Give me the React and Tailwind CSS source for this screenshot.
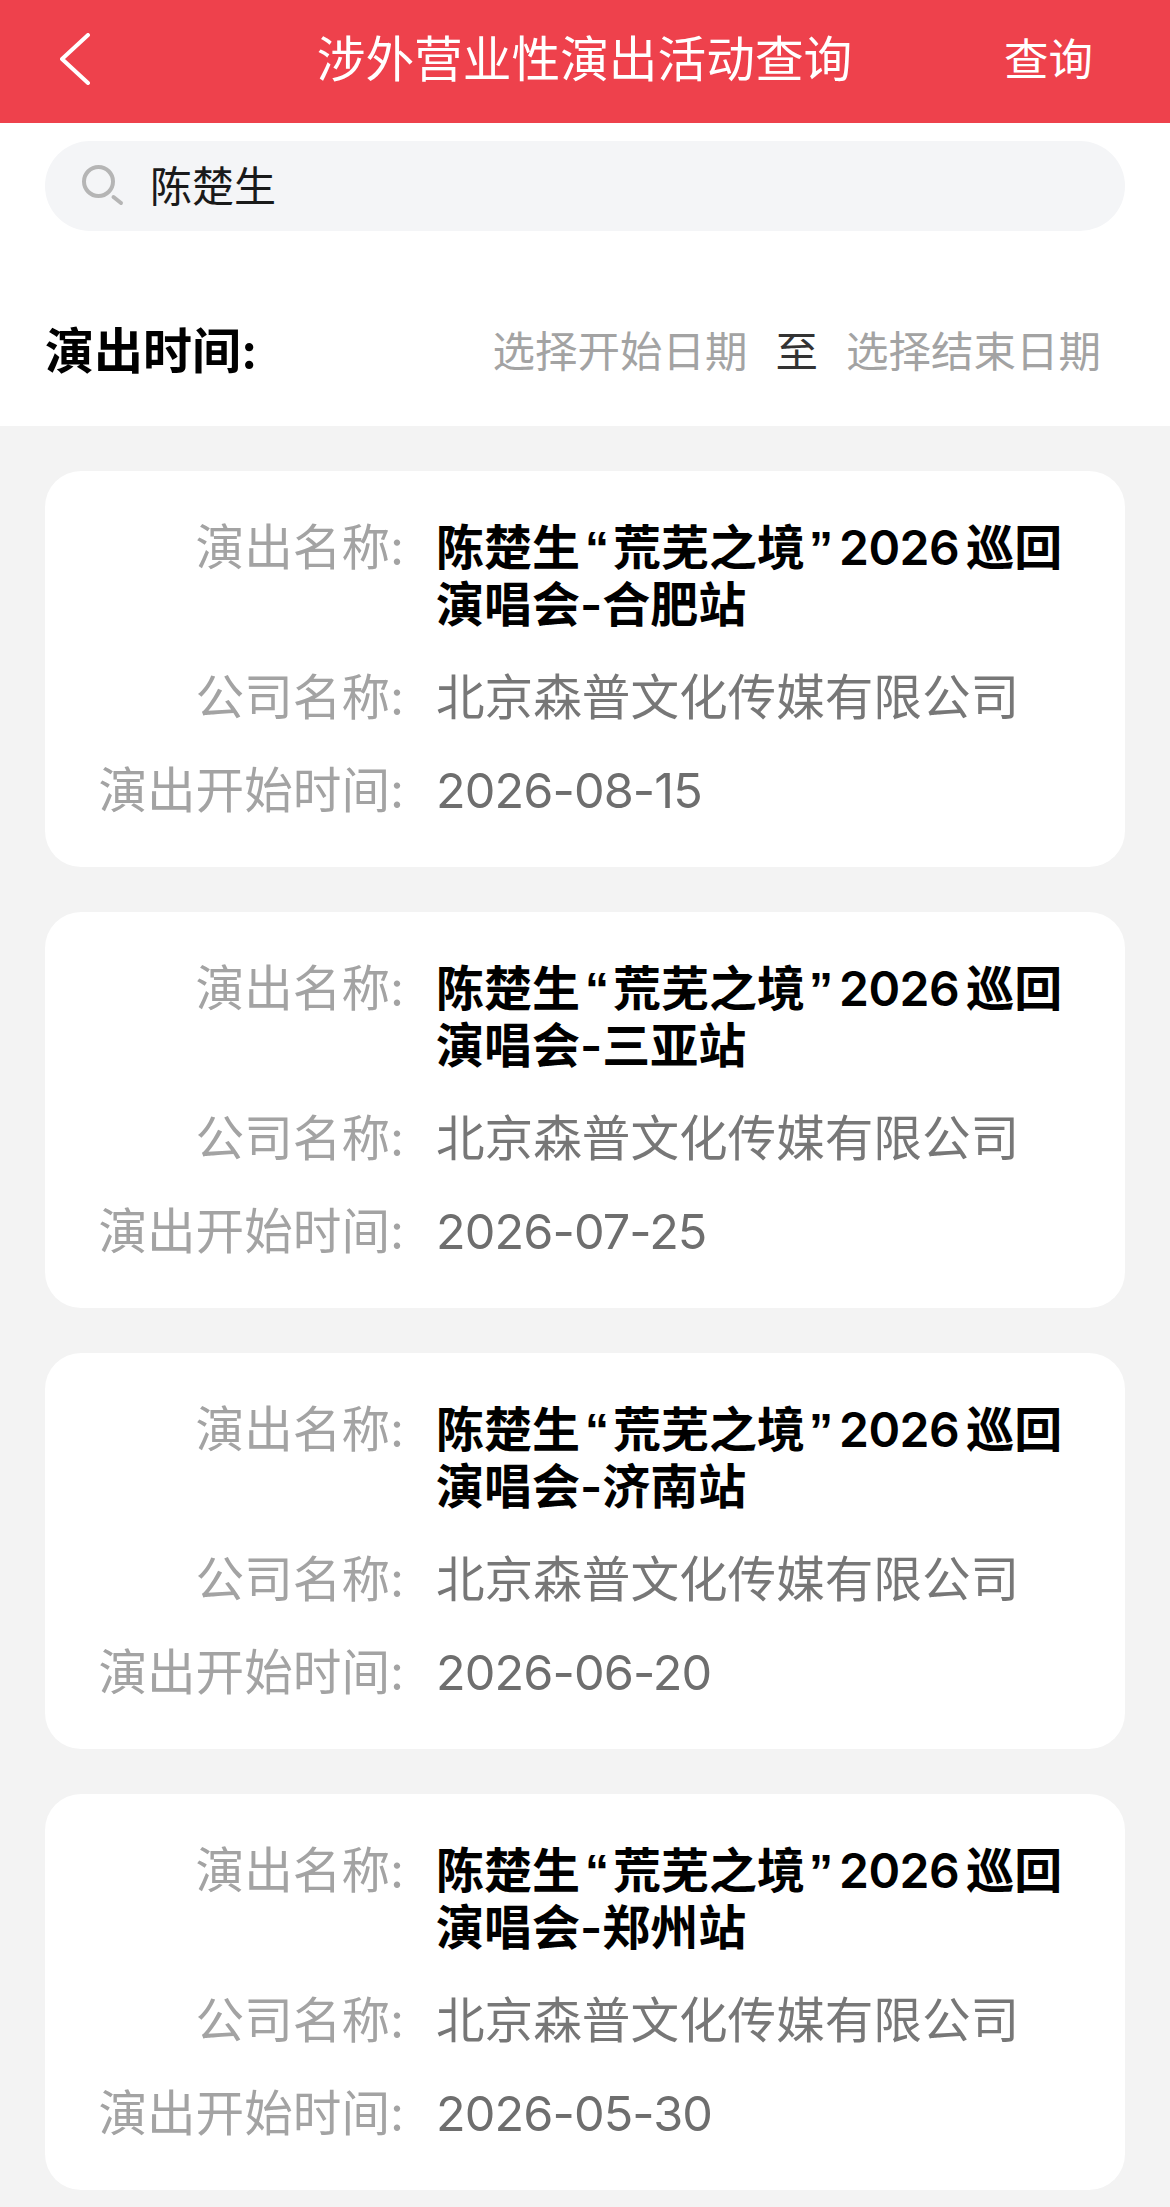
const shows = [
  { city: '合肥站', date: '2026-08-15' },
  { city: '三亚站', date: '2026-07-25' },
  { city: '济南站', date: '2026-06-20' },
  { city: '郑州站', date: '2026-05-30' },
];

function Row({ label, children, className }) {
  return (
    <div className="flex">
      <div className="w-[359px] shrink-0 text-right text-[#a3a3a3]">{label}:</div>
      <div className={`ml-[32px] flex-1 ${className}`}>{children}</div>
    </div>
  );
}

function ShowCard({ city, date }) {
  return (
    <div className="flex flex-col gap-9 rounded-[36px] bg-white pr-[30px] py-12 text-[48.6px] leading-[57px]">
      <Row label="演出名称" className="text-[48px] font-semibold text-black">
        陈楚生<span className="pl-[5px] pr-[4px] font-['Liberation_Sans'] leading-none">“</span>荒芜之境<span className="pl-[4px] pr-[6px] font-['Liberation_Sans'] leading-none">”</span>
        <span className="mr-[7px] tracking-[-0.5px]">2026</span>巡回演唱会-{city}
      </Row>
      <Row label="公司名称" className="text-[#777777]">北京森普文化传媒有限公司</Row>
      <Row label="演出开始时间" className="tracking-[-0.9px] text-[#6e6e6e]">{date}</Row>
    </div>
  );
}

export default function App() {
  return (
    <div className="min-h-[2207px] bg-[#f3f3f3] font-['Inter','Noto_Sans_CJK_SC',sans-serif]">
      <header className="flex h-[123px] items-start bg-[#ee414c] pt-[31px] text-white">
        <div className="w-[60px]"></div>
        <svg width="30" height="52" viewBox="0 0 30 52" fill="none" stroke="currentColor" strokeWidth="4" strokeLinecap="round" strokeLinejoin="round" className="mt-[2px]">
          <path d="M28 2 L2 26 L28 50" />
        </svg>
        <div className="flex-1 pl-[77px] text-center text-[48.7px] leading-[58px]">涉外营业性演出活动查询</div>
        <div className="w-[168px] pl-[2px] text-[44.5px] leading-[58px]">查询</div>
      </header>

      <section className="h-[303px] bg-white px-[45px] pt-[18px]">
        <div className="flex h-[90px] items-center rounded-[45px] bg-[#f4f5f7] pl-[37px] text-[42px] text-[#1a1a1a]">
          <svg width="42" height="42" viewBox="0 0 42 42" fill="none" stroke="#b5b5b5" strokeWidth="4" strokeLinecap="round">
            <circle cx="16.5" cy="16.5" r="14.5" />
            <path d="M31.5 32 L39 38" />
          </svg>
          <span className="ml-[26px]">陈楚生</span>
        </div>
        <div className="mt-[84px] flex items-center justify-between pr-[24px]">
          <div className="text-[49px] font-bold leading-[74px] text-black">演出时间:</div>
          <div className="flex items-center gap-[28px] text-[42.5px] text-[#a3a3a3]">
            <span>选择开始日期</span>
            <span className="text-[#333333]">至</span>
            <span>选择结束日期</span>
          </div>
        </div>
      </section>

      <main className="flex flex-col gap-[45px] px-[45px] pt-[45px]">
        {shows.map((s) => (
          <ShowCard key={s.city} city={s.city} date={s.date} />
        ))}
      </main>
    </div>
  );
}
